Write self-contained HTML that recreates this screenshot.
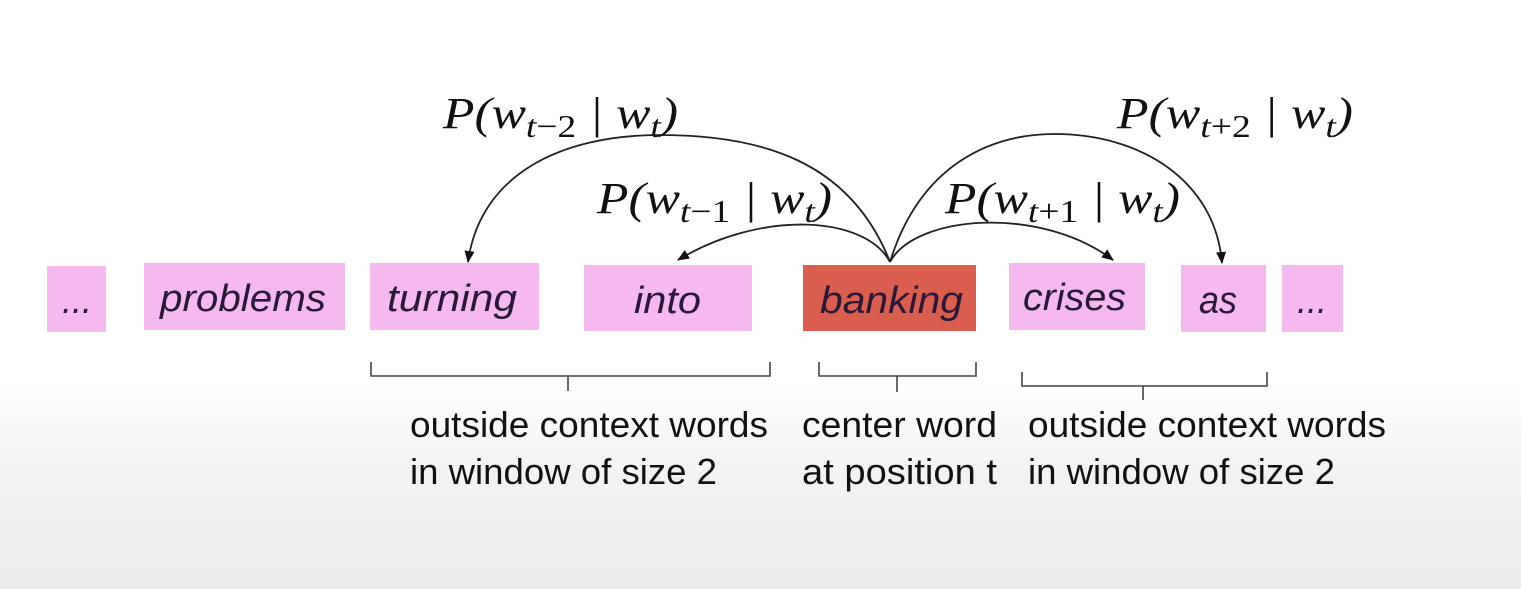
<!DOCTYPE html>
<html><head><meta charset="utf-8"><style>
html,body{margin:0;padding:0;}
body{width:1521px;height:589px;overflow:hidden;background:linear-gradient(to bottom,#fff 0px,#fff 380px,#f3f3f3 470px,#ebebeb 589px);}
svg{display:block}
.w{font-family:"Liberation Sans",sans-serif;font-style:italic;font-size:38px;fill:#2a1838;}
.l{font-family:"Liberation Sans",sans-serif;font-size:36px;fill:#111;}
.m{font-family:"Liberation Serif",serif;font-style:italic;font-size:44px;fill:#111;}
.s{font-size:32px;}
.u{font-style:normal;}
</style></head><body>
<svg width="1521" height="589" viewBox="0 0 1521 589" xmlns="http://www.w3.org/2000/svg">
<defs><marker id="a" markerWidth="12" markerHeight="12" refX="11" refY="5" orient="auto" markerUnits="userSpaceOnUse" viewBox="0 0 12 10"><path d="M0,0 L12,5 L0,10 Z" fill="#111"/></marker></defs>
<g fill="#f5b9ef">
<rect x="47" y="266" width="59" height="66"/>
<rect x="144" y="263" width="201" height="67"/>
<rect x="370" y="263" width="169" height="67"/>
<rect x="584" y="265" width="168" height="66"/>
<rect x="1009" y="263" width="136" height="67"/>
<rect x="1181" y="265" width="85" height="67"/>
<rect x="1282" y="265" width="61" height="67"/>
</g>
<rect x="803" y="265" width="173" height="66" fill="#da5e4e"/>
<text class="w" x="62" y="313" textLength="30" lengthAdjust="spacingAndGlyphs">...</text>
<text class="w" x="160" y="311" textLength="166" lengthAdjust="spacingAndGlyphs">problems</text>
<text class="w" x="387" y="311" textLength="130" lengthAdjust="spacingAndGlyphs">turning</text>
<text class="w" x="634" y="313" textLength="67" lengthAdjust="spacingAndGlyphs">into</text>
<text class="w" x="820" y="313" textLength="143" lengthAdjust="spacingAndGlyphs">banking</text>
<text class="w" x="1023" y="310" textLength="103" lengthAdjust="spacingAndGlyphs">crises</text>
<text class="w" x="1199" y="313" textLength="38" lengthAdjust="spacingAndGlyphs">as</text>
<text class="w" x="1297" y="313" textLength="30" lengthAdjust="spacingAndGlyphs">...</text>
<g fill="none" stroke="#222" stroke-width="1.8">
<path d="M890,262 C850,160 760,135 660,135 C560,135 480,175 468,262" marker-end="url(#a)"/>
<path d="M890,262 C865,215 760,210 678,260" marker-end="url(#a)"/>
<path d="M890,262 C915,215 1040,205 1113,260" marker-end="url(#a)"/>
<path d="M890,262 C920,165 990,134 1055,134 C1140,134 1215,180 1222,263" marker-end="url(#a)"/>
</g>
<g class="m">
<text x="443" y="128" textLength="235" lengthAdjust="spacingAndGlyphs">P(w<tspan class="s" dy="9">t</tspan><tspan class="s u">−2</tspan><tspan dy="-9"> | w</tspan><tspan class="s" dy="9">t</tspan><tspan dy="-9">)</tspan></text>
<text x="597" y="213" textLength="235" lengthAdjust="spacingAndGlyphs">P(w<tspan class="s" dy="9">t</tspan><tspan class="s u">−1</tspan><tspan dy="-9"> | w</tspan><tspan class="s" dy="9">t</tspan><tspan dy="-9">)</tspan></text>
<text x="945" y="213" textLength="235" lengthAdjust="spacingAndGlyphs">P(w<tspan class="s" dy="9">t</tspan><tspan class="s u">+1</tspan><tspan dy="-9"> | w</tspan><tspan class="s" dy="9">t</tspan><tspan dy="-9">)</tspan></text>
<text x="1117" y="128" textLength="236" lengthAdjust="spacingAndGlyphs">P(w<tspan class="s" dy="9">t</tspan><tspan class="s u">+2</tspan><tspan dy="-9"> | w</tspan><tspan class="s" dy="9">t</tspan><tspan dy="-9">)</tspan></text>
</g>
<g fill="none" stroke="#444" stroke-width="1.6">
<path d="M371,362 V376 H770 V362 M568,376 V391"/>
<path d="M819,362 V376 H976 V362 M897,376 V392"/>
<path d="M1022,372 V386 H1267 V372 M1143,386 V400"/>
</g>
<text class="l" x="410" y="437" textLength="358" lengthAdjust="spacingAndGlyphs">outside context words</text>
<text class="l" x="410" y="484" textLength="307" lengthAdjust="spacingAndGlyphs">in window of size 2</text>
<text class="l" x="802" y="437" textLength="195" lengthAdjust="spacingAndGlyphs">center word</text>
<text class="l" x="802" y="484" textLength="195" lengthAdjust="spacingAndGlyphs">at position t</text>
<text class="l" x="1028" y="437" textLength="358" lengthAdjust="spacingAndGlyphs">outside context words</text>
<text class="l" x="1028" y="484" textLength="307" lengthAdjust="spacingAndGlyphs">in window of size 2</text>
</svg>
</body></html>
